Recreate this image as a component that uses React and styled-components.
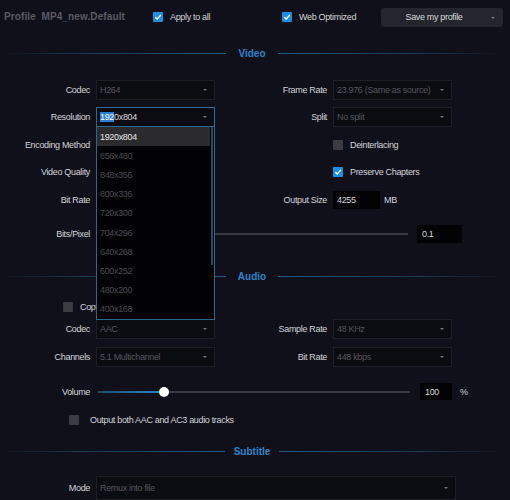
import React from 'react';
import styled, { createGlobalStyle } from 'styled-components';

const Global = createGlobalStyle`
  html, body { margin: 0; padding: 0; background: #10101a; }
  body {
    font-family: "Liberation Sans", Arial, sans-serif;
    font-size: 9px;
    letter-spacing: -0.33px;
    color: #d3d3d8;
  }
  * { box-sizing: border-box; }
`;

const Page = styled.div`
  width: 510px;
  height: 500px;
  overflow: hidden;
  background: #10101a;
  display: flex;
  flex-direction: column;
`;

const TopBar = styled.div`
  height: 34px;
  display: grid;
  grid-template-columns: 149px 129px 99px 122px;
  align-items: center;
  padding-left: 4px;
`;

const Title = styled.div`
  font-weight: bold;
  font-size: 10px;
  letter-spacing: 0.1px;
  color: #5b5b64;
`;

const CheckItem = styled.label`
  display: flex;
  align-items: center;
  gap: ${p => p.$gap || 7}px;
  color: #d3d3d8;
  white-space: nowrap;
  height: 20px;
  padding-left: ${p => p.$pl || 0}px;
`;

const Box = styled.span`
  width: 10px;
  height: 10px;
  border-radius: 1px;
  flex: 0 0 10px;
  background: ${p => (p.$checked ? '#1a8fe4' : '#3b3b44')};
  display: flex;
  align-items: center;
  justify-content: center;
`;

const SaveButton = styled.div`
  position: relative;
  height: 19px;
  margin-top: 1px;
  background: #25252e;
  border-radius: 3px;
  color: #d8d8dc;
  display: flex;
  align-items: center;
  justify-content: center;
  padding-right: 16px;
  &::after {
    content: '';
    position: absolute;
    right: 8px;
    top: 9px;
    border-left: 2.5px solid transparent;
    border-right: 2.5px solid transparent;
    border-top: 2.5px solid #7c7c84;
  }
`;

const SectionHeader = styled.div`
  height: 40px;
  margin-top: ${p => p.$mt || 0}px;
  display: flex;
  align-items: center;
  gap: ${p => p.$gap || 12}px;
  padding: 0 6px 0 0;
`;

const Line = styled.div`
  flex: 1;
  height: 1px;
  background: linear-gradient(
    ${p => (p.$side === 'left' ? 'to right' : 'to left')},
    rgba(30, 80, 115, 0) 0%,
    rgba(30, 80, 115, 0.55) 30%,
    #1f5a82 100%
  );
`;

const SectionTitle = styled.div`
  font-weight: bold;
  font-size: 10px;
  letter-spacing: 0;
  color: #2d84c8;
`;

const FormGrid = styled.div`
  display: grid;
  grid-template-columns: 90px 119px 106px 119px;
  column-gap: 6px;
  row-gap: ${p => p.$rowGap}px;
  grid-auto-rows: 20px;
  align-items: center;
  margin-top: ${p => p.$mt}px;
`;

const Label = styled.span`
  text-align: right;
  white-space: nowrap;
  color: #d3d3d8;
`;

const Select = styled.div`
  position: relative;
  height: ${p => p.$h || 20}px;
  width: ${p => (p.$w ? `${p.$w}px` : 'auto')};
  margin-left: ${p => p.$ml || 0}px;
  background: #0b0b12;
  border: 1px solid ${p => (p.$active ? '#2d6c93' : '#1e1e28')};
  color: #56565e;
  padding-left: 3px;
  display: flex;
  align-items: center;
  white-space: nowrap;
  &::after {
    content: '';
    position: absolute;
    right: 7px;
    top: 50%;
    margin-top: -1px;
    border-left: 2.5px solid transparent;
    border-right: 2.5px solid transparent;
    border-top: 2.5px solid #74747c;
  }
`;

const ActiveText = styled.span`
  color: #d8d8dc;
`;

const Selected = styled.span`
  background: #2a7ed2;
  color: #fff;
`;

const Anchor = styled.div`
  position: relative;
  height: 20px;
`;

const DropList = styled.div`
  position: absolute;
  left: 0;
  top: 19px;
  width: 119px;
  height: 194px;
  background: #020204;
  border: 1px solid #2a678d;
  z-index: 10;
`;

const Option = styled.div`
  height: 19.2px;
  display: flex;
  align-items: center;
  padding-left: 3px;
  margin-right: 4px;
  background: ${p => (p.$hl ? '#2b2b2e' : 'transparent')};
  color: ${p => (p.$hl ? '#e6e6e8' : '#4a4a51')};
`;

const ScrollThumb = styled.div`
  position: absolute;
  right: 1px;
  top: 0;
  width: 2px;
  height: 138px;
  background: #1d4b69;
`;

const NumRow = styled.div`
  display: flex;
  align-items: center;
  gap: 4px;
`;

const NumBox = styled.div`
  width: ${p => p.$w}px;
  height: ${p => p.$h}px;
  flex: 0 0 ${p => p.$w}px;
  background: #030305;
  color: #d6d6da;
  padding-left: ${p => p.$pl}px;
  display: flex;
  align-items: center;
`;

const SliderRow = styled.div`
  display: flex;
  align-items: center;
  height: ${p => p.$h}px;
  margin-top: ${p => p.$mt}px;
`;

const RowLabel = styled.span`
  width: 90px;
  flex: 0 0 90px;
  text-align: right;
  color: #d3d3d8;
`;

const Track = styled.div`
  position: relative;
  width: ${p => p.$w}px;
  height: 2px;
  margin-left: 8px;
  margin-right: ${p => p.$mr}px;
  background: #393941;
`;

const Fill = styled.div`
  position: absolute;
  left: 0;
  top: 0;
  height: 2px;
  background: linear-gradient(to right, #1a4a6e, #2b8ad4);
`;

const Thumb = styled.div`
  position: absolute;
  top: -4px;
  width: 10px;
  height: 10px;
  margin-left: -5px;
  border-radius: 50%;
  background: #ffffff;
`;

const Unit = styled.span`
  margin-left: ${p => p.$ml}px;
  color: #d3d3d8;
`;

const Row = styled.div`
  display: flex;
  align-items: center;
  height: ${p => p.$h}px;
  margin-top: ${p => p.$mt}px;
`;

const Check = ({ checked }) => (
  <Box $checked={checked}>
    {checked && (
      <svg width="8" height="8" viewBox="0 0 8 8">
        <polyline points="1.3,4.2 3.2,6 6.8,2" fill="none" stroke="#fff" strokeWidth="1.4" />
      </svg>
    )}
  </Box>
);

const resolutions = ['1920x804', '856x480', '848x356', '800x336', '720x300', '704x296', '640x268', '600x252', '480x200', '400x168'];

export default function App() {
  return (
    <Page>
      <Global />
      <TopBar>
        <Title>Profile&nbsp; MP4_new.Default</Title>
        <CheckItem>
          <Check checked />
          Apply to all
        </CheckItem>
        <CheckItem>
          <Check checked />
          Web Optimized
        </CheckItem>
        <SaveButton>Save my profile</SaveButton>
      </TopBar>

      <SectionHeader>
        <Line $side="left" />
        <SectionTitle>Video</SectionTitle>
        <Line $side="right" />
      </SectionHeader>

      <FormGrid $rowGap={7.5} $mt={6}>
        <Label>Codec</Label>
        <Select>H264</Select>
        <Label>Frame Rate</Label>
        <Select>23.976 (Same as source)</Select>

        <Label>Resolution</Label>
        <Anchor>
          <Select $active>
            <ActiveText>
              <Selected>192</Selected>0x804
            </ActiveText>
          </Select>
          <DropList>
            {resolutions.map((r, i) => (
              <Option key={r} $hl={i === 0}>{r}</Option>
            ))}
            <ScrollThumb />
          </DropList>
        </Anchor>
        <Label>Split</Label>
        <Select>No split</Select>

        <Label>Encoding Method</Label>
        <Select />
        <span />
        <CheckItem>
          <Check />
          Deinterlacing
        </CheckItem>

        <Label>Video Quality</Label>
        <Select />
        <span />
        <CheckItem>
          <Check checked />
          Preserve Chapters
        </CheckItem>

        <Label>Bit Rate</Label>
        <Select />
        <Label>Output Size</Label>
        <NumRow>
          <NumBox $w={47} $h={18} $pl={4}>4255</NumBox>
          MB
        </NumRow>
      </FormGrid>

      <SliderRow $h={18} $mt={15}>
        <RowLabel>Bits/Pixel</RowLabel>
        <Track $w={310} $mr={9}>
          <Thumb style={{ left: '10%' }} />
        </Track>
        <NumBox $w={45} $h={18} $pl={5}>0.1</NumBox>
      </SliderRow>

      <SectionHeader $mt={14}>
        <Line $side="left" />
        <SectionTitle>Audio</SectionTitle>
        <Line $side="right" />
      </SectionHeader>

      <Row $h={20} $mt={1}>
        <CheckItem $pl={63}>
          <Check />
          Copy
        </CheckItem>
      </Row>

      <FormGrid $rowGap={8} $mt={2}>
        <Label>Codec</Label>
        <Select>AAC</Select>
        <Label>Sample Rate</Label>
        <Select>48 KHz</Select>

        <Label>Channels</Label>
        <Select>5.1 Multichannel</Select>
        <Label>Bit Rate</Label>
        <Select>448 kbps</Select>
      </FormGrid>

      <SliderRow $h={17} $mt={16}>
        <RowLabel>Volume</RowLabel>
        <Track $w={312} $mr={10}>
          <Fill style={{ width: '21%' }} />
          <Thumb style={{ left: '21%' }} />
        </Track>
        <NumBox $w={32} $h={17} $pl={5}>100</NumBox>
        <Unit $ml={8}>%</Unit>
      </SliderRow>

      <Row $h={20} $mt={10}>
        <CheckItem $pl={69} $gap={11}>
          <Check />
          Output both AAC and AC3 audio tracks
        </CheckItem>
      </Row>

      <SectionHeader $mt={1} $gap={9}>
        <Line $side="left" />
        <SectionTitle>Subtitle</SectionTitle>
        <Line $side="right" />
      </SectionHeader>

      <Row $h={24} $mt={5}>
        <RowLabel>Mode</RowLabel>
        <Select $h={24} $w={360} $ml={6}>Remux into file</Select>
      </Row>
    </Page>
  );
}
